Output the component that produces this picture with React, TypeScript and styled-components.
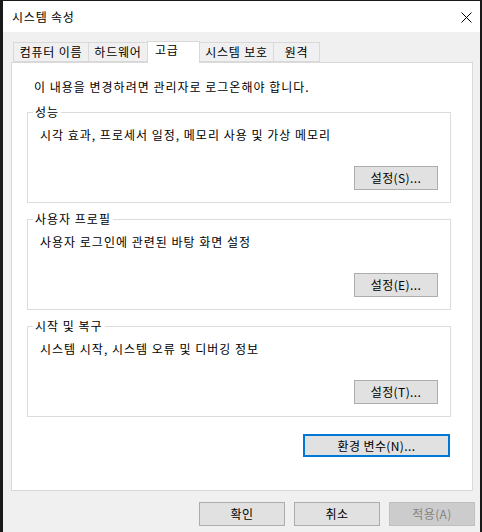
import styled, { createGlobalStyle } from "styled-components";

const GlobalStyle = createGlobalStyle`
  html, body {
    margin: 0;
    padding: 0;
    background: #191919;
  }
  body {
    font-family: "Noto Sans CJK KR", "Noto Sans", sans-serif;
    font-size: 12px;
    color: #000;
  }
`;

const Window = styled.div`
  margin: 1px 0 0 3px;
  width: 477px;
  height: 531px;
  background: #f0f0f0;
  display: flex;
  flex-direction: column;
`;

const TitleBar = styled.div`
  height: 31px;
  background: #fff;
  display: flex;
  align-items: center;
  justify-content: space-between;
  padding-left: 9px;
  padding-right: 8px;
  font-size: 12px;
  letter-spacing: 0.8px;
`;

const CloseButton = styled.div`
  width: 11px;
  height: 11px;
  display: flex;
  margin-top: 1px;
`;

const Body = styled.div`
  padding-left: 8px;
`;

const TabStrip = styled.div`
  margin-top: 9px;
  padding-left: 2px;
  height: 21px;
  display: flex;
  align-items: flex-end;
  letter-spacing: 0.8px;
`;

const Tab = styled.div<{ $w: number; $active?: boolean }>`
  box-sizing: border-box;
  width: ${(p) => p.$w}px;
  height: ${(p) => (p.$active ? 22 : 20)}px;
  margin-right: -1px;
  margin-bottom: ${(p) => (p.$active ? -1 : 0)}px;
  border: 1px solid #d9d9d9;
  border-bottom: ${(p) => (p.$active ? "none" : "1px solid #d9d9d9")};
  background: ${(p) => (p.$active ? "#fff" : "#f0f0f0")};
  position: relative;
  z-index: ${(p) => (p.$active ? 1 : 0)};
  display: flex;
  justify-content: ${(p) => (p.$active ? "flex-start" : "center")};
  align-items: ${(p) => (p.$active ? "flex-start" : "center")};
  padding-left: ${(p) => (p.$active ? 7 : 0)}px;
  line-height: ${(p) => (p.$active ? "16px" : "18px")};
  white-space: nowrap;
`;

const Panel = styled.div`
  box-sizing: border-box;
  width: 462px;
  height: 429px;
  background: #fff;
  border: 1px solid #d9d9d9;
  padding: 16px 21px 0 15px;
  display: flex;
  flex-direction: column;
`;

const Notice = styled.div`
  line-height: 16px;
  margin-left: 7px;
  margin-bottom: 17px;
  letter-spacing: 1px;
`;

const GroupList = styled.div`
  display: flex;
  flex-direction: column;
  gap: 16px;
`;

const GroupBox = styled.div`
  position: relative;
  border: 1px solid #dcdcdc;
  padding: 14px 12px 12px 12px;
  display: flex;
  flex-direction: column;
`;

const Legend = styled.span`
  position: absolute;
  top: -9px;
  left: 5px;
  padding: 0 2px;
  background: #fff;
  line-height: 16px;
  letter-spacing: 1px;
`;

const GroupText = styled.div`
  line-height: 16px;
  margin-bottom: 23px;
  letter-spacing: 1px;
`;

const ButtonRow = styled.div<{ $gap?: number; $pr?: number }>`
  display: flex;
  justify-content: flex-end;
  gap: ${(p) => p.$gap ?? 0}px;
  padding-right: ${(p) => p.$pr ?? 0}px;
`;

const Button = styled.button<{ $w: number; $focused?: boolean }>`
  box-sizing: border-box;
  width: ${(p) => p.$w}px;
  height: ${(p) => (p.$focused ? 23 : 24)}px;
  margin: 0;
  padding: 0;
  font-family: inherit;
  font-size: 12px;
  letter-spacing: 0.4px;
  color: ${(p) => (p.disabled ? "#838383" : "#000")};
  background: ${(p) => (p.disabled ? "#cccccc" : "#e1e1e1")};
  border: ${(p) =>
    p.$focused
      ? "2px solid #0078d7"
      : p.disabled
      ? "1px solid #bfbfbf"
      : "1px solid #adadad"};
  display: flex;
  align-items: center;
  justify-content: center;
  line-height: 16px;
`;

const EnvRow = styled(ButtonRow)`
  margin-top: 17px;
`;

const Footer = styled(ButtonRow)`
  margin-top: 11px;
`;

const groups = [
  { title: "성능", text: "시각 효과, 프로세서 일정, 메모리 사용 및 가상 메모리", button: "설정(S)..." },
  { title: "사용자 프로필", text: "사용자 로그인에 관련된 바탕 화면 설정", button: "설정(E)..." },
  { title: "시작 및 복구", text: "시스템 시작, 시스템 오류 및 디버깅 정보", button: "설정(T)..." },
];

const tabs = [
  { label: "컴퓨터 이름", w: 76 },
  { label: "하드웨어", w: 60 },
  { label: "고급", w: 53, active: true },
  { label: "시스템 보호", w: 75 },
  { label: "원격", w: 47 },
];

const App: React.FC = () => {
  return (
    <>
      <GlobalStyle />
      <Window>
        <TitleBar>
          <span>시스템 속성</span>
          <CloseButton>
            <svg width="11" height="11" viewBox="0 0 11 11">
              <path d="M0.5 0.5 L10.5 10.5 M10.5 0.5 L0.5 10.5" stroke="#000" strokeWidth="1" />
            </svg>
          </CloseButton>
        </TitleBar>
        <Body>
          <TabStrip>
            {tabs.map((t) => (
              <Tab key={t.label} $w={t.w} $active={t.active}>
                {t.label}
              </Tab>
            ))}
          </TabStrip>
          <Panel>
            <Notice>이 내용을 변경하려면 관리자로 로그온해야 합니다.</Notice>
            <GroupList>
              {groups.map((g) => (
                <GroupBox key={g.title}>
                  <Legend>{g.title}</Legend>
                  <GroupText>{g.text}</GroupText>
                  <ButtonRow>
                    <Button $w={84}>{g.button}</Button>
                  </ButtonRow>
                </GroupBox>
              ))}
            </GroupList>
            <EnvRow $pr={1}>
              <Button $w={147} $focused>
                환경 변수(N)...
              </Button>
            </EnvRow>
          </Panel>
        </Body>
        <Footer $gap={9} $pr={5}>
          <Button $w={86}>확인</Button>
          <Button $w={86}>취소</Button>
          <Button $w={86} disabled>
            적용(A)
          </Button>
        </Footer>
      </Window>
    </>
  );
};

export default App;
